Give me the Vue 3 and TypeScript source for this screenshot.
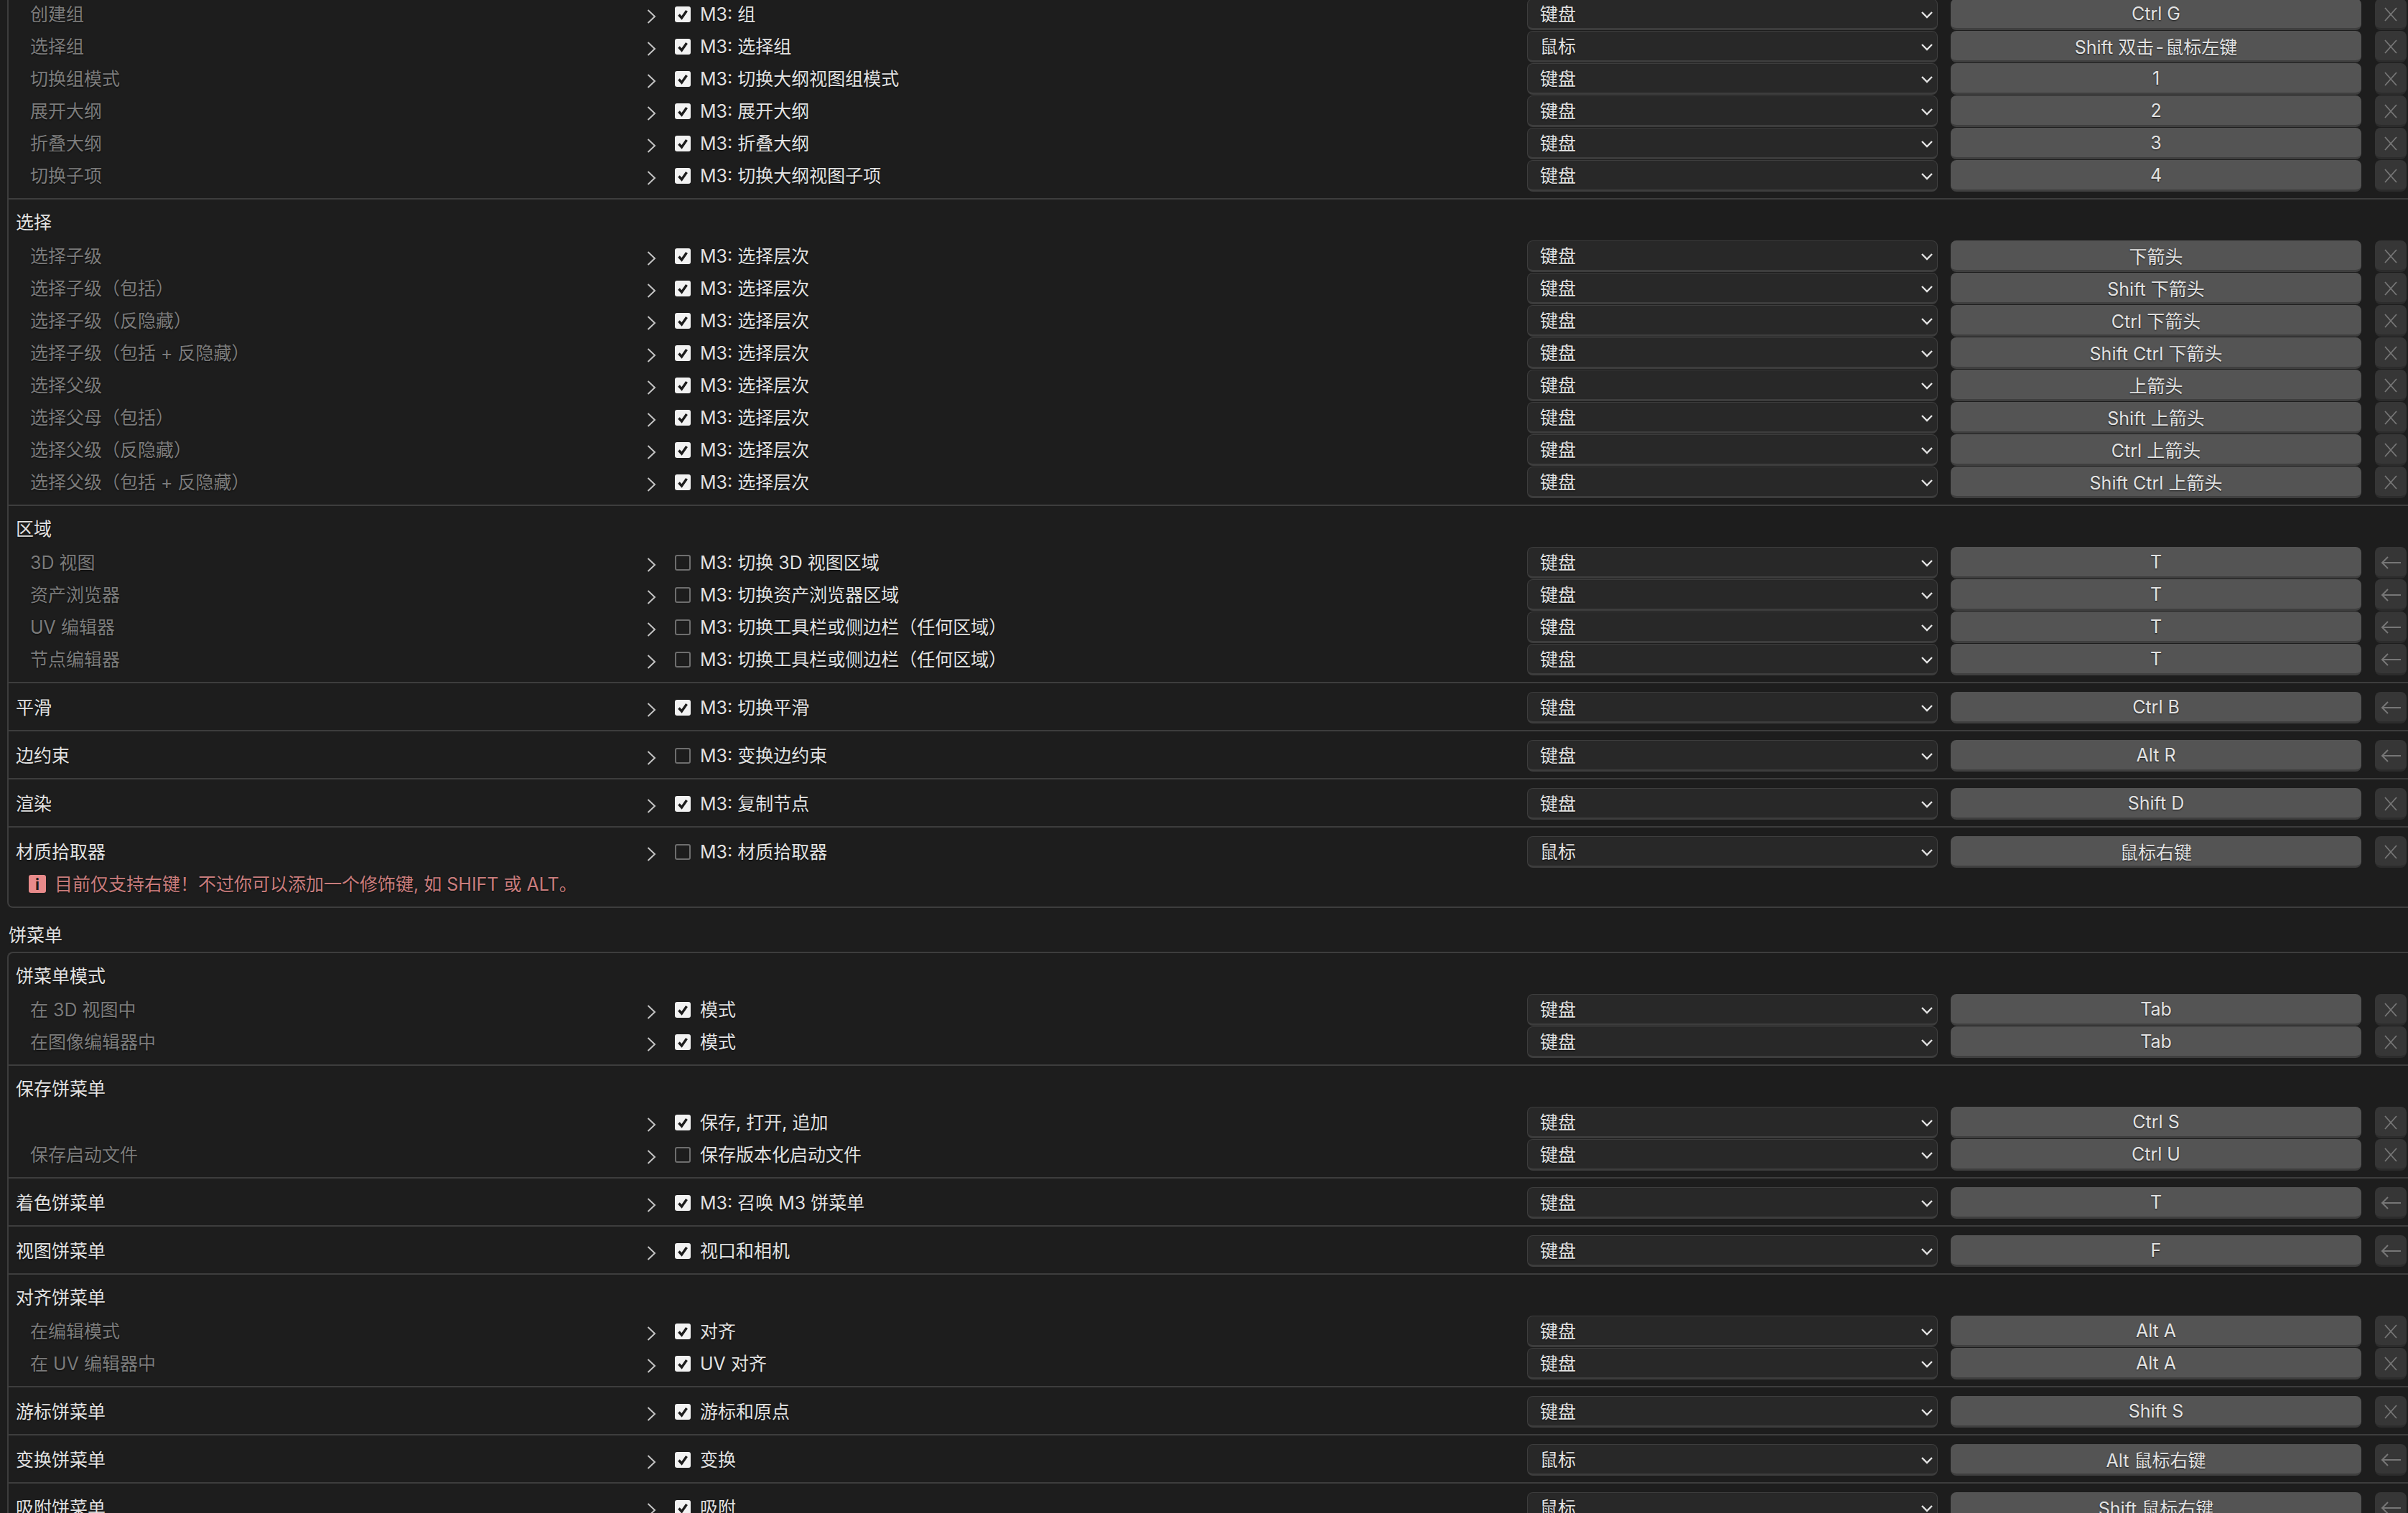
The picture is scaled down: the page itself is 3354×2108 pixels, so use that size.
<script setup lang="ts">
type Btn = 'x' | 'back';
interface Row {
  label?: string;
  on: boolean;
  op: string;
  dev?: string;
  key: string;
  btn?: Btn;
}
interface Section {
  title?: string;
  inline?: boolean;
  rows: Row[];
  note?: string;
}
interface Group {
  title?: string;
  sections: Section[];
}

const mk = (label: string, op: string, key: string, on = true, dev = '键盘', btn: Btn = 'x'): Row => ({
  label, on, op, dev, key, btn,
});

const groups: Group[] = [
  {
    sections: [
      {
        rows: [
          mk('创建组', 'M3: 组', 'Ctrl G'),
          mk('选择组', 'M3: 选择组', 'Shift 双击\u200a-\u200a鼠标左键', true, '鼠标'),
          mk('切换组模式', 'M3: 切换大纲视图组模式', '1'),
          mk('展开大纲', 'M3: 展开大纲', '2'),
          mk('折叠大纲', 'M3: 折叠大纲', '3'),
          mk('切换子项', 'M3: 切换大纲视图子项', '4'),
        ],
      },
      {
        title: '选择',
        rows: [
          mk('选择子级', 'M3: 选择层次', '下箭头'),
          mk('选择子级（包括）', 'M3: 选择层次', 'Shift 下箭头'),
          mk('选择子级（反隐藏）', 'M3: 选择层次', 'Ctrl 下箭头'),
          mk('选择子级（包括 + 反隐藏）', 'M3: 选择层次', 'Shift Ctrl 下箭头'),
          mk('选择父级', 'M3: 选择层次', '上箭头'),
          mk('选择父母（包括）', 'M3: 选择层次', 'Shift 上箭头'),
          mk('选择父级（反隐藏）', 'M3: 选择层次', 'Ctrl 上箭头'),
          mk('选择父级（包括 + 反隐藏）', 'M3: 选择层次', 'Shift Ctrl 上箭头'),
        ],
      },
      {
        title: '区域',
        rows: [
          mk('3D 视图', 'M3: 切换 3D 视图区域', 'T', false, '键盘', 'back'),
          mk('资产浏览器', 'M3: 切换资产浏览器区域', 'T', false, '键盘', 'back'),
          mk('UV 编辑器', 'M3: 切换工具栏或侧边栏（任何区域）', 'T', false, '键盘', 'back'),
          mk('节点编辑器', 'M3: 切换工具栏或侧边栏（任何区域）', 'T', false, '键盘', 'back'),
        ],
      },
      { inline: true, rows: [mk('平滑', 'M3: 切换平滑', 'Ctrl B', true, '键盘', 'back')] },
      { inline: true, rows: [mk('边约束', 'M3: 变换边约束', 'Alt R', false, '键盘', 'back')] },
      { inline: true, rows: [mk('渲染', 'M3: 复制节点', 'Shift D')] },
      {
        inline: true,
        rows: [mk('材质拾取器', 'M3: 材质拾取器', '鼠标右键', false, '鼠标')],
        note: '目前仅支持右键！不过你可以添加一个修饰键, 如 SHIFT 或 ALT。',
      },
    ],
  },
  {
    title: '饼菜单',
    sections: [
      {
        title: '饼菜单模式',
        rows: [mk('在 3D 视图中', '模式', 'Tab'), mk('在图像编辑器中', '模式', 'Tab')],
      },
      {
        title: '保存饼菜单',
        rows: [
          mk('', '保存, 打开, 追加', 'Ctrl S'),
          mk('保存启动文件', '保存版本化启动文件', 'Ctrl U', false),
        ],
      },
      { inline: true, rows: [mk('着色饼菜单', 'M3: 召唤 M3 饼菜单', 'T', true, '键盘', 'back')] },
      { inline: true, rows: [mk('视图饼菜单', '视口和相机', 'F', true, '键盘', 'back')] },
      {
        title: '对齐饼菜单',
        rows: [mk('在编辑模式', '对齐', 'Alt A'), mk('在 UV 编辑器中', 'UV 对齐', 'Alt A')],
      },
      { inline: true, rows: [mk('游标饼菜单', '游标和原点', 'Shift S')] },
      { inline: true, rows: [mk('变换饼菜单', '变换', 'Alt 鼠标右键', true, '鼠标', 'back')] },
      { inline: true, rows: [mk('吸附饼菜单', '吸附', 'Shift 鼠标右键', true, '鼠标', 'back')] },
    ],
  },
];
</script>

<template>
  <div class="page">
    <div v-for="(g, gi) in groups" :key="gi" class="group">
      <div v-if="g.title" class="group-title">{{ g.title }}</div>
      <div class="box" :class="{ open: gi === 0 }">
        <div v-for="(s, si) in g.sections" :key="si" class="section">
          <div v-if="s.title" class="sec-title">{{ s.title }}</div>
          <div v-for="(r, ri) in s.rows" :key="ri" class="row">
            <div class="label" :class="{ head: s.inline }">{{ r.label }}</div>
            <svg class="chev" width="14" height="22" viewBox="0 0 14 22">
              <path d="M2.5 2 L12 11 L2.5 20" fill="none" stroke="#c4c4c4" stroke-width="2" />
            </svg>
            <span class="check" :class="{ on: r.on }">
              <svg v-if="r.on" width="22" height="22" viewBox="0 0 22 22">
                <path d="M5.5 11.5 L9.5 16 L16.5 6" fill="none" stroke="#1c1c1c" stroke-width="3.4" />
              </svg>
            </span>
            <div class="op">{{ r.op }}</div>
            <div class="select">
              <span>{{ r.dev }}</span>
              <svg class="drop" width="16" height="10" viewBox="0 0 16 10">
                <path d="M1 1 L8 8 L15 1" fill="none" stroke="#e4e4e4" stroke-width="2.4" />
              </svg>
            </div>
            <div class="key">{{ r.key }}</div>
            <div class="tool">
              <svg v-if="r.btn === 'x'" width="20" height="20" viewBox="0 0 20 20">
                <path d="M2 1 L18 19 M18 1 L2 19" fill="none" stroke="#777" stroke-width="1.8" />
              </svg>
              <svg v-else width="30" height="20" viewBox="0 0 30 20">
                <path d="M29 10 H3 M11 2 L3 10 L11 18" fill="none" stroke="#777" stroke-width="2" />
              </svg>
            </div>
          </div>
          <div v-if="s.note" class="note">
            <span class="note-icon">i</span>
            <span class="note-text">{{ s.note }}</span>
          </div>
        </div>
      </div>
    </div>
  </div>
</template>

<style scoped>
.page {
  height: 2108px;
  overflow: hidden;
  background: #1d1d1d;
  color: #e2e2e2;
  font-family: Inter, "Noto Sans CJK SC", sans-serif;
  font-size: 25px;
  text-shadow: 0 1px 2px rgba(0, 0, 0, 0.7);
  box-sizing: border-box;
  padding-left: 10px;
}
.group:first-child {
  margin-top: -14px;
}
.group-title {
  height: 42px;
  margin: 19px 0 0 2px;
  line-height: 38px;
}
.box {
  border: 2px solid #3d3d3d;
  border-right: 0;
  border-radius: 8px 0 0 8px;
}
.box.open {
  border-top: 0;
  border-top-left-radius: 0;
}
.section {
  padding: 11px 0 9px;
  border-bottom: 2px solid #3d3d3d;
}
.box > .section:last-child {
  border-bottom: 0;
}
.sec-title {
  height: 45px;
  line-height: 43px;
  padding-left: 10px;
}
.row {
  display: grid;
  grid-template-columns: 858px 14px 48px 1fr 572px 590px 63px;
  align-items: center;
  height: 45px;
  padding: 0 2px 0 30px;
}
.label {
  color: #7b7b7b;
  white-space: nowrap;
  padding-bottom: 4px;
}
.label.head {
  color: #e2e2e2;
  margin-left: -20px;
}
.chev {
  margin-top: 6px;
}
.check {
  margin-left: 26px;
  width: 22px;
  height: 22px;
  box-sizing: border-box;
  border: 2px solid #6e6e6e;
  border-radius: 3px;
  display: flex;
  align-items: center;
  justify-content: center;
}
.check.on {
  background: #f2f2f2;
  border: 0;
}
.op {
  margin-left: 13px;
  padding-bottom: 4px;
  white-space: nowrap;
}
.select {
  height: 44px;
  box-sizing: border-box;
  display: flex;
  align-items: center;
  justify-content: space-between;
  padding: 0 6px 2px 17px;
  background: #282828;
  border: 1px solid #3d3d3d;
  border-bottom-width: 3px;
  border-radius: 8px;
}
.drop {
  margin-top: 6px;
}
.key {
  height: 44px;
  box-sizing: border-box;
  margin-left: 18px;
  padding-top: 1px;
  display: flex;
  align-items: center;
  justify-content: center;
  background: #545454;
  border-bottom: 3px solid #3f3f3f;
  border-radius: 8px;
}
.tool {
  height: 44px;
  box-sizing: border-box;
  margin-left: 19px;
  padding-top: 3px;
  display: flex;
  align-items: center;
  justify-content: center;
  background: #363636;
  border-bottom: 3px solid #2c2c2c;
  border-radius: 8px;
}
.note {
  height: 45px;
  display: flex;
  align-items: center;
  gap: 12px;
  padding-left: 28px;
  color: #c97d7d;
}
.note-text {
  padding-bottom: 4px;
}
.note-icon {
  width: 24px;
  height: 25px;
  border-radius: 3px;
  background: #e88b8b;
  color: #1d1d1d;
  display: flex;
  align-items: center;
  justify-content: center;
  font-size: 22px;
  font-weight: 700;
  text-shadow: none;
}
</style>

<style>
html,
body {
  margin: 0;
  background: #1d1d1d;
}
</style>
